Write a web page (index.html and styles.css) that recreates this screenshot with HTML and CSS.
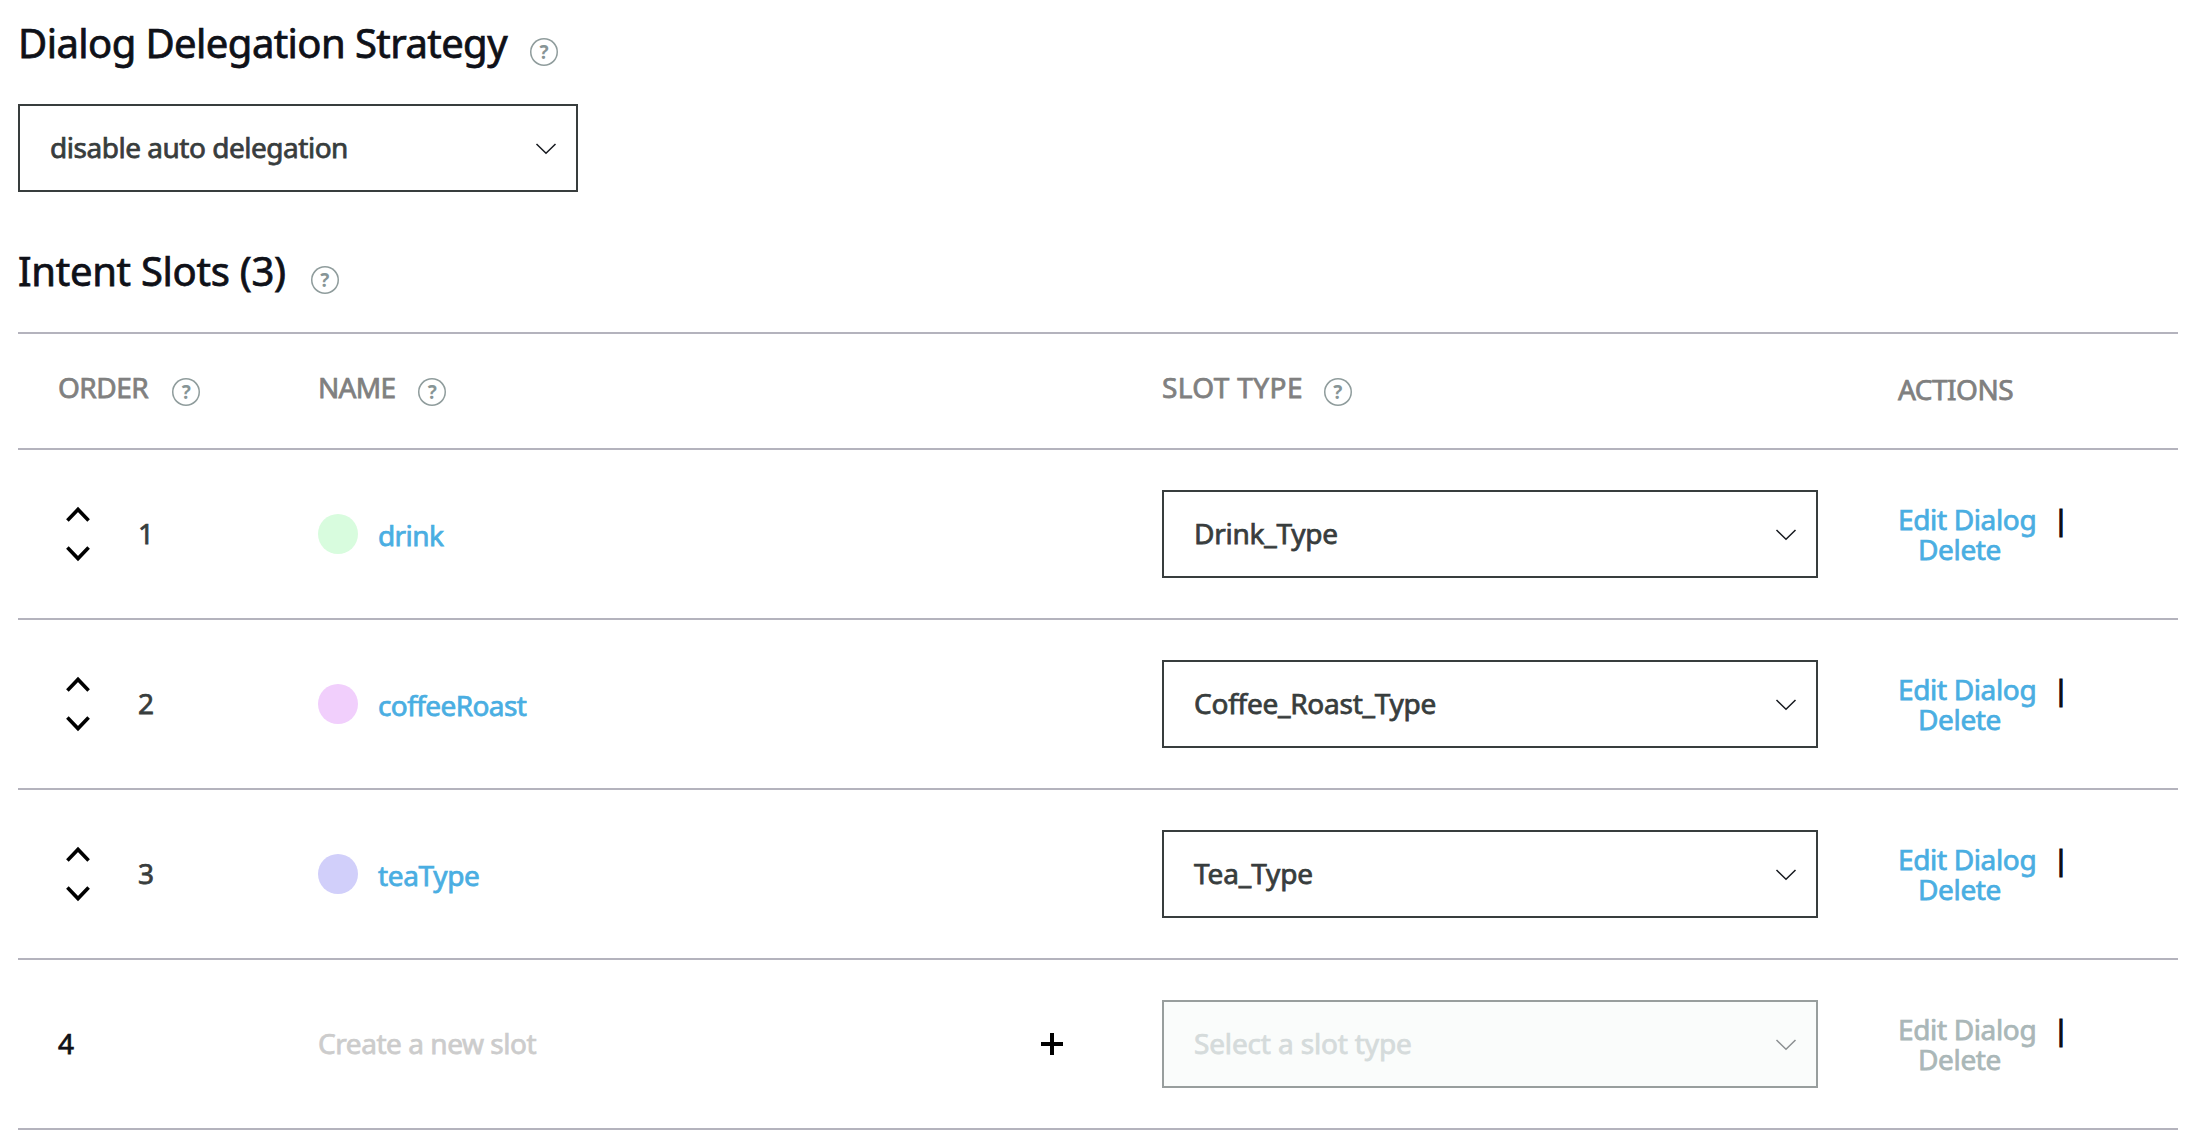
FILE: index.html
```html
<!DOCTYPE html>
<html lang="en">
<head>
<meta charset="utf-8">
<title>Intent Slots</title>
<link rel="stylesheet" href="styles.css">
</head>
<body>
<svg class="defs" width="0" height="0" aria-hidden="true">
  <symbol id="chevron" viewBox="0 0 22 12"><path d="M1.5 1 11 10.3 20.5 1" fill="none" stroke="currentColor" stroke-width="1.5"/></symbol>
  <symbol id="up" viewBox="0 0 24 16"><path d="M1.4 14.4 12 3.4 22.6 14.4" fill="none" stroke="#000" stroke-width="3.6"/></symbol>
  <symbol id="down" viewBox="0 0 24 16"><path d="M1.4 1.6 12 12.6 22.6 1.6" fill="none" stroke="#000" stroke-width="3.6"/></symbol>
</svg>
<main class="page">
  <h2 class="title">Dialog Delegation Strategy<span class="help">?</span></h2>
  <div class="select strategy"><span class="auto">disable auto delegation</span><svg class="chevron"><use href="#chevron"/></svg></div>
  <h2 class="title slots-title"><span class="slots-text">Intent Slots (3)</span><span class="help">?</span></h2>

  <section class="table">
    <div class="row head">
      <div class="cell"><span class="label">ORDER</span><span class="help">?</span></div>
      <div class="cell"><span class="label name-label">NAME</span><span class="help">?</span></div>
      <div class="cell"><span class="label type-label">SLOT TYPE</span><span class="help">?</span></div>
      <div class="cell actions-head"><span class="label">ACTIONS</span></div>
    </div>
    <div class="row">
      <div class="cell order"><div class="arrows"><svg><use href="#up"/></svg><svg><use href="#down"/></svg></div><span class="num">1</span></div>
      <div class="cell name"><i class="dot green"></i><a>drink</a></div>
      <div class="select"><span>Drink_Type</span><svg class="chevron"><use href="#chevron"/></svg></div>
      <div class="actions"><div><a>Edit Dialog</a><span class="bar">|</span></div><a class="delete">Delete</a></div>
    </div>
    <div class="row">
      <div class="cell order"><div class="arrows"><svg><use href="#up"/></svg><svg><use href="#down"/></svg></div><span class="num">2</span></div>
      <div class="cell name"><i class="dot pink"></i><a>coffeeRoast</a></div>
      <div class="select"><span>Coffee_Roast_Type</span><svg class="chevron"><use href="#chevron"/></svg></div>
      <div class="actions"><div><a>Edit Dialog</a><span class="bar">|</span></div><a class="delete">Delete</a></div>
    </div>
    <div class="row">
      <div class="cell order"><div class="arrows"><svg><use href="#up"/></svg><svg><use href="#down"/></svg></div><span class="num">3</span></div>
      <div class="cell name"><i class="dot violet"></i><a class="tea-link">teaType</a></div>
      <div class="select"><span class="tea">Tea_Type</span><svg class="chevron"><use href="#chevron"/></svg></div>
      <div class="actions"><div><a>Edit Dialog</a><span class="bar">|</span></div><a class="delete">Delete</a></div>
    </div>
    <div class="row">
      <div class="cell"><span class="next">4</span></div>
      <div class="cell create"><span>Create a new slot</span><svg class="plus" viewBox="0 0 22 22"><path d="M11 0v22M0 11h22" stroke="#000" stroke-width="4"/></svg></div>
      <div class="select disabled"><span>Select a slot type</span><svg class="chevron"><use href="#chevron"/></svg></div>
      <div class="actions muted"><div><a>Edit Dialog</a><span class="bar">|</span></div><a class="delete">Delete</a></div>
    </div>
  </section>
</main>
</body>
</html>
```
FILE: styles.css
```css
* { box-sizing: border-box; }
body {
  margin: 0;
  background: #fff;
  color: #0f1118;
  font: 400 28px/30px "Noto Sans", sans-serif;
  letter-spacing: -0.25px;
  -webkit-text-stroke: 0.75px currentColor;
}
.defs { display: block; }
.page { width: 2178px; padding: 18px 0 0 18px; }

.title {
  display: flex;
  height: 50px;
  margin: 0;
  font-size: 40px;
  font-weight: 400;
  line-height: 50px;
  letter-spacing: -0.57px;
}
.title .help { margin: 20px 0 0 23px; }
.slots-title { margin-top: 54px; }
.slots-text { letter-spacing: -0.28px; }
.title.slots-title .help { margin-left: 25px; }
.help {
  display: flex;
  flex: none;
  justify-content: center;
  width: 28px;
  height: 28px;
  box-shadow: inset 0 0 0 1.5px #8f9c9c;
  border-radius: 50%;
  color: #879596;
  font-size: 19px;
  font-weight: 700;
  line-height: 28px;
  letter-spacing: 0;
  -webkit-text-stroke: 0;
}

.select {
  display: flex;
  align-items: center;
  justify-content: space-between;
  height: 88px;
  padding: 0 19px 0 30px;
  border: 2px solid #383d3d;
  color: #383d3d;
}
.select span { padding-bottom: 2px; }
.select .tea { letter-spacing: -0.1px; }
.strategy { width: 560px; margin-top: 36px; }
.select .auto { letter-spacing: -0.48px; }
.chevron { width: 22px; height: 12px; margin-top: 1px; color: #16191f; }
.disabled { border-color: #989e9d; background: #fafcfb; color: #d5dbdb; letter-spacing: -0.15px; }
.disabled .chevron { color: #8b8f91; }

.table { margin-top: 36px; border-top: 2px solid #b4b3bd; }
.row {
  display: grid;
  grid-template-columns: 260px 844px 656px 1fr;
  align-items: center;
  height: 170px;
  padding-left: 40px;
  border-bottom: 2px solid #b4b3bd;
}
.head { height: 116px; color: #808080; letter-spacing: -0.5px; }
.cell { display: flex; align-items: center; }
.head .help { margin: 2px 0 0 24px; }
.head .label { margin-bottom: 8px; }
.name-label { letter-spacing: -0.7px; }
.head .name-label + .help { margin-left: 23px; }
.type-label { letter-spacing: 0.4px; }
.head .type-label + .help { margin-left: 21px; }
.actions-head { padding-left: 80px; }
.head .actions-head .label { margin-bottom: 4px; }

.arrows { display: flex; flex-direction: column; gap: 24px; padding: 0 0 1px 8px; }
.arrows svg { display: block; width: 24px; height: 16px; }
.num { margin: 0 0 2px 48px; color: #383d3d; }
.dot { width: 40px; height: 40px; margin-right: 20px; border-radius: 50%; }
.green { background: #d8fcde; }
.pink { background: #f1cffc; }
.violet { background: #d1cffa; }
.name a { padding-top: 2px; letter-spacing: -0.6px; }
.name .tea-link { letter-spacing: -0.35px; }
a { color: #4aaee2; letter-spacing: -0.35px; }
.actions { padding-left: 80px; }
.delete { margin-left: 20px; }
.bar { margin-left: 17px; color: #0a0a12; -webkit-text-stroke-width: 1.2px; }
.muted a { color: #aab7b8; }
.create { justify-content: space-between; padding-right: 99px; color: #ccc; }
.create span, .next { padding-bottom: 2px; }
.create span { letter-spacing: -0.45px; }
.plus { width: 22px; height: 22px; }
```
